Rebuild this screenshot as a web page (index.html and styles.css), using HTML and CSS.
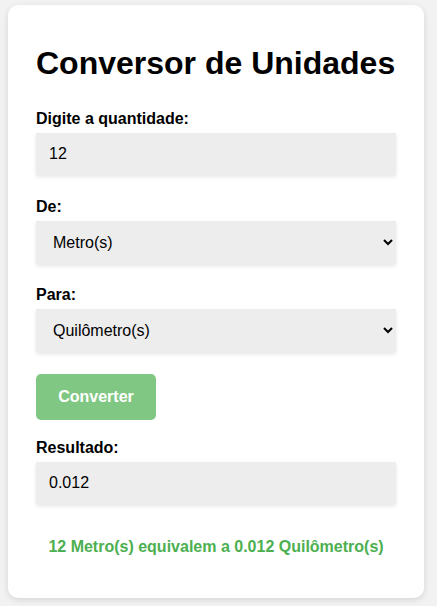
FILE: index.html
```html
<!DOCTYPE html>
<html lang="pt-BR">
<head>
<meta charset="utf-8">
<title>Conversor de Unidades</title>
<link rel="stylesheet" href="styles.css">
</head>
<body>
<div class="card">
  <h1 class="title">Conversor de Unidades</h1>
  <label class="label" for="qtd">Digite a quantidade:</label>
  <input class="field" id="qtd" type="text" value="12">
  <label class="label" for="de">De:</label>
  <select class="field select" id="de">
    <option>Metro(s)</option>
    <option>Quilômetro(s)</option>
  </select>
  <label class="label" for="para">Para:</label>
  <select class="field select" id="para">
    <option>Quilômetro(s)</option>
    <option>Metro(s)</option>
  </select>
  <button class="btn" type="button">Converter</button>
  <label class="label result-label">Resultado:</label>
  <div class="field result">0.012</div>
  <p class="summary">12 Metro(s) equivalem a 0.012 Quilômetro(s)</p>
</div>
</body>
</html>
```
FILE: styles.css
```css
* { box-sizing: border-box; }
html, body {
  margin: 0;
  padding: 0;
  background: #f2f2f2;
  font-family: "Liberation Sans", Arial, sans-serif;
  color: #000;
}
body {
  padding: 5px 13px 8px 8px;
}
.card {
  width: 416px;
  background: #fff;
  border-radius: 10px;
  box-shadow: 0 2px 6px rgba(0, 0, 0, 0.12);
  padding: 19px 28px 42px 28px;
  display: flex;
  flex-direction: column;
  align-items: stretch;
}
.title {
  font-size: 32px;
  font-weight: bold;
  margin: 21px 0 28px 0;
  line-height: normal;
}
.label {
  display: block;
  font-size: 16px;
  font-weight: bold;
  margin-bottom: 5px;
}
.field {
  display: block;
  width: 100%;
  font-family: "Liberation Sans", Arial, sans-serif;
  font-size: 16px;
  color: #000;
  background: #ededed;
  border: none;
  border-radius: 0;
  padding: 12px 12px 12px 13px;
  box-shadow: 0 2px 4px rgba(0, 0, 0, 0.1);
  margin: 0 0 23px 0;
  outline: none;
  line-height: normal;
}
.select {
  height: 43px;
  padding: 0 8px 0 13px;
  margin-bottom: 22px;
}
.btn {
  align-self: flex-start;
  width: 120px;
  height: 46px;
  background: #81c784;
  color: #fff;
  font-family: "Liberation Sans", Arial, sans-serif;
  font-size: 16px;
  font-weight: bold;
  border: none;
  border-radius: 5px;
  margin: 0 0 19px 0;
  cursor: pointer;
}
.result {
  height: 42px;
  margin-bottom: 0;
}
.summary {
  margin: 34px 0 0 0;
  text-align: center;
  color: #4caf50;
  font-size: 16px;
  font-weight: bold;
  line-height: normal;
}
```
